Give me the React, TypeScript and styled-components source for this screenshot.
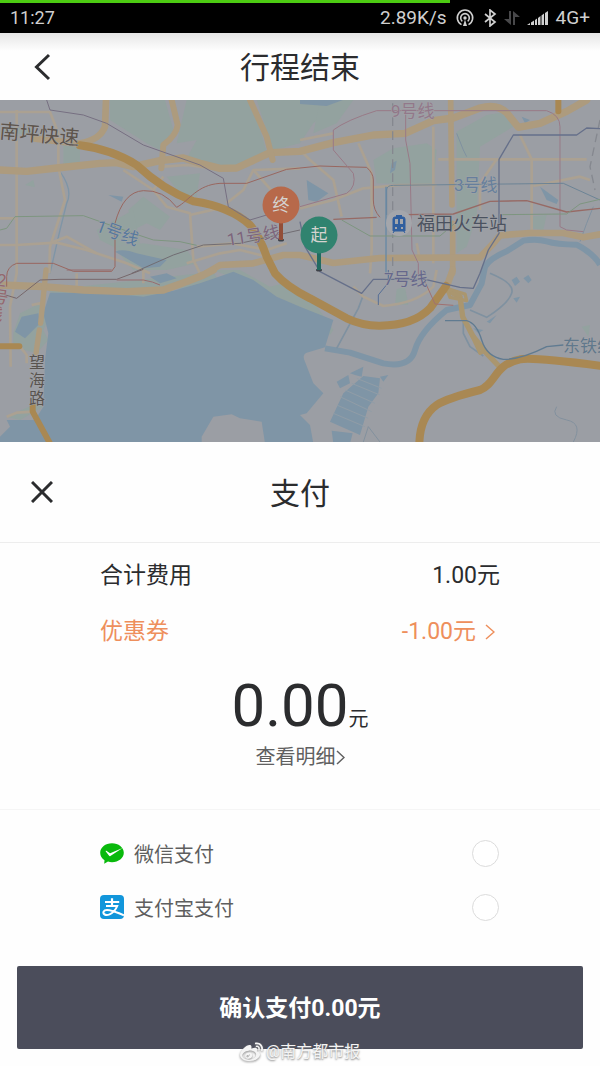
import React, { useState } from "react";
import styled, { createGlobalStyle } from "styled-components";
import { FaWeibo } from "react-icons/fa";

const GlobalStyle = createGlobalStyle`
  * { box-sizing: border-box; }
  body {
    margin: 0;
    background: #fefefe;
    color: #2b2c2e;
    font-family: Roboto, "Noto Sans CJK SC", sans-serif;
  }
  button, input { font: inherit; color: inherit; }
`;

const Page = styled.div`
  display: flex;
  flex-direction: column;
  min-height: 100vh;
  background: #fefefe;
`;

const StatusBar = styled.div`
  position: relative;
  display: flex;
  align-items: center;
  justify-content: space-between;
  height: 33px;
  padding: 2px 10px 0;
  background: #000;
  color: #d0d0d0;
  font-size: 18px;
  line-height: 24px;
`;

const LoadBar = styled.div`
  position: absolute;
  top: 0;
  left: 0;
  width: 75%;
  height: 3px;
  background: #4ccb12;
`;

const StatusIcons = styled.div`
  display: flex;
  align-items: center;
  gap: 7px;
  font-size: 19px;
  svg { display: block; }
`;

const Header = styled.header<{ $tall?: boolean }>`
  display: grid;
  grid-template-columns: 84px 1fr 84px;
  align-items: center;
  height: ${(p) => (p.$tall ? 101 : 67)}px;
  background: ${(p) =>
    p.$tall ? "#fefefe" : "linear-gradient(#e6e6e6, #fefefe 18px)"};
  border-bottom: ${(p) => (p.$tall ? "1px solid #ededed" : "none")};
`;

const Title = styled.h1`
  margin: 0;
  padding-top: 3px;
  font-size: 30px;
  line-height: 40px;
  font-weight: 400;
  text-align: center;
`;

const IconButton = styled.button`
  justify-self: center;
  display: flex;
  padding: 0;
  border: 0;
  background: none;
  cursor: pointer;
`;

const MapArea = styled.div`
  height: 342px;
  overflow: hidden;
  background: #9b9ea4;
  svg { display: block; width: 100%; height: 100%; }
`;

const Bill = styled.section`
  padding: 5px 100px 38px;
  border-bottom: 1px solid #f5f5f5;
`;

const BillRow = styled.div<{ $accent?: boolean }>`
  display: flex;
  align-items: center;
  justify-content: space-between;
  height: 56px;
  font-size: 23px;
  line-height: 32px;
  color: ${(p) => (p.$accent ? "#ee8f5c" : "#2b2c2e")};
`;

const CouponButton = styled.button`
  display: flex;
  align-items: center;
  gap: 9px;
  padding: 0 5px 0 0;
  border: 0;
  background: none;
  line-height: 32px;
  cursor: pointer;
`;

const Amount = styled.p`
  display: flex;
  align-items: baseline;
  justify-content: center;
  height: 62px;
  margin: 16px 0 5px;
  font-size: 60px;
  line-height: 60px;
  small { font-size: 20px; line-height: 28px; }
`;

const DetailLink = styled.a`
  display: flex;
  align-items: center;
  justify-content: center;
  color: #606060;
  font-size: 20px;
  line-height: 28px;
  text-decoration: none;
`;

const Methods = styled.section`
  padding: 16px 100px 32px;
`;

const Method = styled.label`
  display: flex;
  align-items: center;
  gap: 10px;
  height: 54px;
  color: #5e5e5e;
  font-size: 20px;
  line-height: 28px;
  cursor: pointer;
  span { flex: 1; padding-top: 3px; }
`;

const Radio = styled.input`
  appearance: none;
  width: 27px;
  height: 27px;
  margin: 0 1px 0 0;
  border: 1px solid #dcdcdc;
  border-radius: 50%;
  background: #fff;
  &:checked { border: 8px solid #4c4e5c; }
`;

const Footer = styled.footer`
  position: relative;
  padding: 0 17px 17px;
`;

const PayButton = styled.button`
  width: 100%;
  height: 83px;
  padding: 3px 0 0;
  border: 0;
  border-radius: 2px;
  background: #4b4d5b;
  color: #fff;
  font-size: 23px;
  line-height: 32px;
  font-weight: 700;
  cursor: pointer;
`;

const Watermark = styled.div`
  position: absolute;
  left: 0;
  right: 0;
  bottom: 2px;
  display: flex;
  align-items: center;
  justify-content: center;
  gap: 3px;
  color: #f4f4f4;
  font-size: 16px;
  line-height: 24px;
  text-shadow: 0 1px 2px #777;
  pointer-events: none;
  svg { filter: drop-shadow(0 1px 1px #888); }
`;

const Chevron = ({ w, h }: { w: number; h: number }) => (
  <svg width={w} height={h} viewBox={`0 0 ${w} ${h}`} fill="none" stroke="currentColor" strokeWidth="1.5">
    <path d={`M1 1 L${w - 1} ${h / 2} L1 ${h - 1}`} />
  </svg>
);

const WeChatPayIcon = () => (
  <svg width="24" height="24" viewBox="0 0 24 24">
    <path
      d="M12 2.3C5.400 2.300.2 6.500.2 11.800c0 3 1.600 5.600 4.300 7.400L4.200 22.700l3.800-2.100c1.300.4 2.600.6 4 .6 6.500 0 11.800-4.100 11.800-9.400S18.500 2.300 12 2.300Z"
      fill="#09b90c"
    />
    <path d="M5.800 10.600l3.300 4.200c.4.500.8.500 1.300.2L22.600 6.900 10.100 12.300 6.700 10c-.8-.4-1.300.1-.9.600Z" fill="#fff" />
  </svg>
);

const AlipayIcon = () => (
  <svg width="24" height="24" viewBox="0 0 24 24" fill="none">
    <rect width="24" height="24" rx="4" fill="#1296db" />
    <path d="M12 3.200V11M5 7H19.200" stroke="#fff" strokeWidth="2.200" />
    <path
      d="M6 11H17.200Q15 16.800 9.500 19.400C5.500 21 2.600 19 3.600 16.600C5 13.600 11 14.800 24 20.300"
      stroke="#fff"
      strokeWidth="2"
    />
  </svg>
);

type Line = { d: string; c: string; w: number };

const land = "#9b9ea4";
const water = "#7f95a6";
const green = "#93a29f";
const road = "#ad9b7e";
const minor = "#aba192";
const major = "#a98853";

const parks = [
  "M330 0H495L520 90 480 150 440 130 330 60Z",
  "M560 0H750L790 120 800 160 690 205 620 200 560 175 590 120 530 130Z",
  "M770 0H930L1000 20 940 70 900 130 820 150Z",
  "M960 0 1060 0 1010 70 940 100Z",
  "M1120 180 1180 145 1280 130 1310 150 1300 255 1130 250Z",
  "M1370 95 1460 45 1520 35 1540 80 1440 140 1430 350 1400 440 1370 460Z",
  "M190 130 240 130 240 190 190 200Z",
  "M500 230 600 220 590 290 540 280Z",
  "M385 330 430 290 510 350 480 390 440 370 400 390Z",
  "M290 390 400 330 420 430 340 440 300 420Z",
  "M75 255 100 240 105 262Z",
  "M10 80 100 85 100 105 10 100Z",
  "M340 440 430 430 560 450 590 490 500 510 400 510Z",
  "M145 570 640 515 660 550 600 570 520 565 440 600 330 570 160 585Z",
  "M40 700 60 640 120 610 150 650 130 690 145 720 110 760 40 740Z",
  "M640 510 720 510 810 560 850 550 900 585 900 625 800 575Z",
  "M900 590 930 590 1000 690 990 705 900 620Z",
  "M20 950 110 910 130 920 60 960Z",
  "M1190 568 1215 560 1225 615 1185 612Z",
  "M1745 680 1770 675 1765 710Z",
  "M1590 350 1640 345 1630 390 1595 385Z",
];

const minorRoads = [
  "M50 30V520L30 620 32 800", "M0 36H150L175 100V200L195 300 150 440 148 520",
  "M0 435H50L170 428 260 450 380 490 450 520", "M0 355H45", "M150 430 200 410 290 460",
  "M370 210 460 270 500 320 570 340 580 480 600 520", "M460 270 490 230",
  "M490 200 560 195 640 205", "M680 310 730 270 760 210 900 205", "M760 210 840 300",
  "M570 345 680 320", "M590 440 700 430 800 450 860 430", "M560 490 660 460 720 450 800 470",
  "M900 150 930 180 1000 240 1025 350", "M900 325 1000 300 1090 265 1200 255 1310 255",
  "M1075 130 1115 220 1115 450 1110 520", "M1300 80V490", "M1315 178H1760",
  "M1560 105 1595 178 1595 400", "M1490 178 1440 250 1440 330",
  "M1600 258 1740 230 1770 240", "M1250 430 1260 480", "M900 120 1000 100",
  "M230 520V560M430 510V550", "M1060 560 1090 590 1150 618Q1250 610 1300 560L1310 510",
  "M60 740 80 765 80 790", "M20 950 50 938 100 935", "M95 615 120 610 130 625",
];

const mainRoads: Line[] = [
  { d: "M0 210 80 214 170 204 300 190 350 188 400 200 480 182 550 174 600 190 660 205 710 204 810 158 900 154 1000 128 1120 105 1215 100 1300 62 1360 54 1440 24Q1490 10 1520 38L1555 82 1620 70 1700 34 1760 0", c: road, w: 22 },
  { d: "M100 115 230 130 M318 0 315 80 Q300 120 240 130", c: road, w: 20 },
  { d: "M515 0 533 75Q530 105 490 135L484 205", c: road, w: 18 },
  { d: "M750 0 800 110 818 180", c: road, w: 18 },
  { d: "M1352 0 1356 315M1358 370V520", c: road, w: 17 },
  { d: "M610 525 660 495 760 490 850 465 900 465 1000 489 1140 474 1440 472 1480 430 1500 406 1590 399 1690 399 1750 412 1800 403", c: road, w: 20 },
  { d: "M0 555 130 560 250 570 380 575 490 570 560 545 610 525 640 510", c: road, w: 22 },
  { d: "M138 510 130 590 122 670M118 690 108 760", c: road, w: 16 },
  { d: "M1358 510 1340 560", c: road, w: 20 },
  { d: "M1335 568 1380 590 1388 650 1420 710 1460 760 1500 802", c: "#aa966f", w: 16 },
  { d: "M1340 565 1395 582 1400 602 1350 592Z M1405 685 1450 755 1440 760Z", c: "#aa966f", w: 10 },
  { d: "M240 136Q340 150 410 195Q490 270 580 304Q690 320 750 375Q780 410 800 470L825 520Q860 560 930 595L1040 655Q1090 678 1140 677Q1240 677 1290 625L1338 558", c: major, w: 24 },
  { d: "M1258 1030Q1260 950 1310 915Q1340 895 1440 870C1490 850 1480 795 1560 778Q1590 770 1800 797", c: major, w: 24 },
  { d: "M0 739H58", c: major, w: 18 },
  { d: "M98 915 98 935 150 1030", c: major, w: 18 },
  { d: "M1675 0V34", c: major, w: 18 },
];

const rails: Line[] = [
  { d: "M140 0 150 30 250 45 320 70 430 135 600 195 670 235 685 320 750 360 800 345", c: "#766f82", w: 3 },
  { d: "M345 370 Q370 275 430 272T530 322C570 300 590 255 660 250H740L860 208 960 198 1020 200 1100 202Q1120 220 1120 240V300Q1120 330 1140 352", c: "#99665f", w: 3 },
  { d: "M345 370V500L335 514H220L160 490H50Q20 500 20 530V560", c: "#99665f", w: 3 },
  { d: "M0 390 20 385 45 350 250 347 400 400 460 420 540 425 590 436", c: "#7d9680", w: 3 },
  { d: "M395 520 520 465 610 435 720 430 900 390", c: "#706c72", w: 3 },
  { d: "M0 580 50 595 120 540 180 538H350L430 508", c: "#76676a", w: 3 },
  { d: "M200 510H335M350 540H430Q460 545 480 555", c: "#986b6e", w: 3 },
  { d: "M900 320 1040 280Q1070 260 1060 220L1000 150V90Q1040 60 1130 32H1640Q1680 45 1680 80V380L1700 390 1750 395", c: "#997987", w: 3 },
  { d: "M1217 40V120L1230 190 1236 450 1255 490V530", c: "#997987", w: 3 },
  { d: "M1160 345V270Q1160 256 1180 256L1690 250 1800 300", c: "#6c8496", w: 3 },
  { d: "M1158 260V520", c: "#6689a5", w: 4 },
  { d: "M1000 358 1130 352M1220 344 1360 342 1470 304 1580 302 1700 336 1800 325", c: "#976a65", w: 4 },
  { d: "M1025 360 1110 408H1320L1370 365M1500 344 1700 342 1740 312 1800 298", c: "#7d9680", w: 3 },
  { d: "M1800 86 1760 84 1730 105H1540L1497 178V400L1465 450 1440 520 1420 565 1380 562 1275 538H1120L1085 580 960 515 915 440 900 365", c: "#66708a", w: 4 },
  { d: "M1135 615V585L1165 548V510", c: "#566e96", w: 3 },
  { d: "M1275 545 1305 612 1360 616", c: "#a07070", w: 3 },
  { d: "M1335 662H1400Q1430 670 1445 720T1510 778Q1560 780 1640 740L1690 735", c: "#607b91", w: 4 },
];

const streams: Line[] = [
  { d: "M975 745 1050 758 1150 790Q1230 805 1245 750T1340 630L1410 615 1445 550 1455 500Q1470 475 1520 454L1570 422Q1610 415 1640 424T1730 434Q1780 460 1800 494", c: water, w: 18 },
  { d: "M1010 745 1075 625 1090 585", c: "#7f91a0", w: 5 },
  { d: "M1470 520Q1545 550 1535 580T1460 652L1410 630", c: "#7f91a0", w: 5 },
  { d: "M1390 650V700L1410 740 1450 768", c: "#7f91a0", w: 5 },
  { d: "M1670 920Q1650 950 1700 960T1720 1026", c: "#83919e", w: 3 },
  { d: "M1780 320 1760 370 1740 425M1370 100 1390 150 1400 170", c: "#7f91a0", w: 3 },
  { d: "M180 215Q220 270 200 310L180 390 150 520", c: "#7f95a6", w: 4 },
  { d: "M1090 1026 1105 980 1140 1026", c: "#83919e", w: 3 },
];

const ponds = [
  "M150 578 330 580 430 590 520 572 600 550 700 515 760 540 830 590 900 620 1000 660 975 742 920 758Q905 765 915 785L940 850 970 880 920 940 900 945 930 975 940 1030H795L785 965 720 955 695 943 640 950 605 1010V1030H0V1010L30 980 20 960 105 960 130 920 135 780 145 700 130 640Z",
  "M45 695 65 650 115 640 120 670 75 715Z",
  "M1045 -6H900V12L980 18Z",
  "M920 240 925 300 950 305 985 280Z",
  "M345 455Q370 445 410 460L500 480 480 500 430 505Z",
  "M325 285 370 290 365 305Z M450 530 500 520 530 535 480 550Z",
  "M1175 190 1190 182 1185 210 1170 220Z M1565 50 1590 60 1575 70Z",
  "M1620 260 1675 300 1670 312 1640 300Z",
  "M1535 540 1550 530 1560 545 1545 558Z M1570 535 1585 525 1595 540 1585 550Z M1540 595 1560 590 1550 608Z M1460 665 1490 645 1470 670Z M1420 685 1450 690 1435 700Z",
  "M1010 845 1045 825 1050 850 1020 865Z M1050 820 1090 800 1085 830 1065 825Z M1140 830 1165 825 1150 845Z",
  "M990 965 1030 880 1090 828 1140 835 1135 880 1105 920 1080 1005Z",
  "M995 992 1058 1000 1050 1030H1000Z",
];

const Label = styled.text<{ $size: number }>`
  font-size: ${(p) => p.$size}px;
  paint-order: stroke;
  stroke: #a2a3a7;
  stroke-width: 1px;
`;

const PinText = styled.text`
  font-size: 17px;
  fill: #d5d3cf;
  text-anchor: middle;
`;

const strokes = (items: Line[]) =>
  items.map((l, i) => <path key={i} d={l.d} stroke={l.c} strokeWidth={l.w} />);

const Pin = ({ x, y, color, stem, text }: { x: number; y: number; color: string; stem: string; text: string }) => (
  <g>
    <ellipse cx={x} cy={y + 35} rx="3" ry="1.500" fill="#3e4148" />
    <path d={`M${x} ${y + 15}V${y + 35}`} stroke={stem} strokeWidth="4" />
    <circle cx={x} cy={y} r="18.500" fill={color} />
    <PinText x={x} y={y + 6}>{text}</PinText>
  </g>
);

const CityMap = () => (
  <svg viewBox="0 0 600 342" preserveAspectRatio="xMidYMid slice" role="img" aria-label="行程地图">
    <rect width="600" height="342" fill={land} />
    <g transform="scale(0.333333)" fill="none" strokeLinejoin="round">
      <g fill={green}>{parks.map((d, i) => <path key={i} d={d} />)}</g>
      <g fill={water}>{ponds.map((d, i) => <path key={i} d={d} />)}</g>
      <path
        d="M1035 870 1125 910M1020 890 1115 935M1010 915 1105 955M1000 940 1095 980M1055 850 1140 885M1070 835 1145 865"
        stroke="#919da7"
        strokeWidth="3"
      />
      {strokes(streams)}
      <g stroke={minor} strokeWidth="8">{minorRoads.map((d, i) => <path key={i} d={d} />)}</g>
      <g strokeLinecap="round">{strokes(mainRoads)}</g>
      <path d="M1178 10V520M1800 60 1770 200 1785 270" stroke="#85888f" strokeWidth="4" strokeDasharray="26 16" />
      {strokes(rails)}
    </g>
    <Label $size={20} x="-1" y="38" fill="#5d544c" transform="rotate(5 0 38)">南坪快速</Label>
    <Label $size={17} x="95" y="131" fill="#56799d" transform="rotate(20 95 131)">1号线</Label>
    <Label $size={17} x="228" y="146" fill="#7c657c" transform="rotate(-9 228 146)">11号线</Label>
    <Label $size={17} x="391" y="17" fill="#92788a">9号线</Label>
    <Label $size={17} x="454" y="91" fill="#667f9c">3号线</Label>
    <Label $size={17} x="384" y="185" fill="#66688c">7号线</Label>
    <Label $size={17} x="563" y="252" fill="#60788c">东铁线</Label>
    <Label $size={17} x="-4" y="186" fill="#93686f" transform="rotate(8 0 186)">
      <tspan x="-4">2</tspan><tspan x="-7" dy="17">号</tspan><tspan x="-10" dy="17">线</tspan>
    </Label>
    <Label $size={16} x="29" y="268" fill="#58534f">望</Label>
    <Label $size={16} x="29" y="286" fill="#58534f">海</Label>
    <Label $size={16} x="29" y="304" fill="#58534f">路</Label>
    <circle cx="399" cy="123" r="13" fill="#a4a6ab" />
    <rect x="396" y="115" width="6" height="3" fill="#315f9e" />
    <path d="M393 119q0-2 2-2h8q2 0 2 2v12h-12Z M395 130l-2 3M403 130l2 3" fill="#315f9e" stroke="#315f9e" />
    <path d="M395 119h3v5h-3zM400 119h3v5h-3zM395 127h2v2h-2zM401 127h2v2h-2z" fill="#a4a6ab" />
    <Label $size={18} x="417" y="130" fill="#4b5260">福田火车站</Label>
    <Pin x={281} y={105} color="#b7694a" stem="#934e38" text="终" />
    <Pin x={319} y={135} color="#30836f" stem="#226b61" text="起" />
  </svg>
);

const methods = [
  { id: "wechat", name: "微信支付", icon: <WeChatPayIcon /> },
  { id: "alipay", name: "支付宝支付", icon: <AlipayIcon /> },
];

export default function App() {
  const [method, setMethod] = useState("");
  return (
    <Page>
      <GlobalStyle />
      <StatusBar>
        <LoadBar />
        <span>11:27</span>
        <StatusIcons>
          <span>2.89K/s</span>
          <svg width="22" height="18" viewBox="0 0 22 18" fill="none" stroke="currentColor" strokeWidth="1.600">
            <path d="M7.500 15.600A7.700 7.700 0 1 1 14.500 15.600M8.300 12.300A4.300 4.300 0 1 1 13.700 12.300" />
            <circle cx="11" cy="9" r="1.700" fill="currentColor" stroke="none" />
            <path d="M11 10.500 13 17H9Z" fill="currentColor" stroke="none" />
          </svg>
          <svg width="14" height="18" viewBox="0 0 14 18" fill="none" stroke="currentColor" strokeWidth="1.700">
            <path d="M2 5 12 13 7 17V1L12 5 2 13" />
          </svg>
          <svg width="16" height="16" viewBox="0 0 16 16" fill="#48484a">
            <path d="M5 1h2v14L0 9h5zM9 15V1l7 6h-5v8z" />
          </svg>
          <svg width="22" height="16" viewBox="0 0 22 16" fill="currentColor">
            <path d="M0 15 3 13V15ZM4 12.500 7 10.500V15H4ZM8 10 10 8.500V15H8ZM11 8 13.500 6V15H11ZM14.500 5.500 17 3.500V15H14.500ZM18 3 21 1V15H18Z" />
          </svg>
          <span>4G+</span>
        </StatusIcons>
      </StatusBar>

      <Header>
        <IconButton aria-label="返回">
          <svg width="18" height="28" viewBox="0 0 18 28" fill="none" stroke="#2b2c2e" strokeWidth="3">
            <path d="M16 2 3.500 14 16 26" />
          </svg>
        </IconButton>
        <Title>行程结束</Title>
      </Header>

      <MapArea><CityMap /></MapArea>

      <Header $tall>
        <IconButton aria-label="关闭">
          <svg width="22" height="22" viewBox="0 0 22 22" fill="none" stroke="#2b2c2e" strokeWidth="3">
            <path d="M1 1 21 21M21 1 1 21" />
          </svg>
        </IconButton>
        <Title as="h2">支付</Title>
      </Header>

      <Bill>
        <BillRow><span>合计费用</span><span>1.00元</span></BillRow>
        <BillRow $accent>
          <span>优惠券</span>
          <CouponButton>-1.00元<Chevron w={10} h={16} /></CouponButton>
        </BillRow>
        <Amount>0.00<small>元</small></Amount>
        <DetailLink href="#detail">查看明细<Chevron w={9} h={15} /></DetailLink>
      </Bill>

      <Methods>
        {methods.map((m) => (
          <Method key={m.id}>
            {m.icon}
            <span>{m.name}</span>
            <Radio type="radio" name="method" checked={method === m.id} onChange={() => setMethod(m.id)} />
          </Method>
        ))}
      </Methods>

      <Footer>
        <PayButton>确认支付0.00元</PayButton>
        <Watermark><FaWeibo size={23} />@南方都市报</Watermark>
      </Footer>
    </Page>
  );
}
